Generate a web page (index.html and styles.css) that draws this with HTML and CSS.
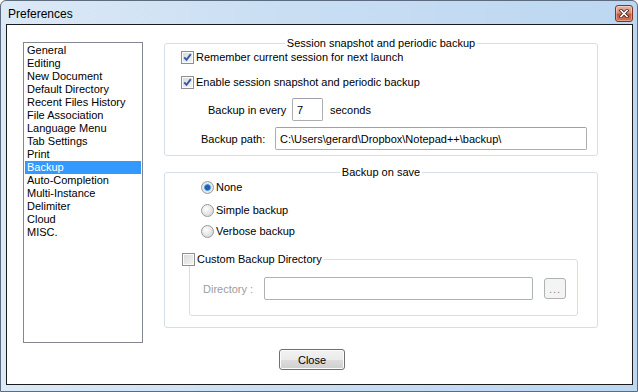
FILE: index.html
```html
<!DOCTYPE html>
<html lang="en">
<head>
	<meta charset="UTF-8">
	<meta name="viewport" content="width=device-width, initial-scale=1.0">
	<title>Preferences</title>
	<link rel="stylesheet" href="styles.css">
</head>
<body>
	<div id="window">
		<header class="title-bar">
			<span class="title-text">Preferences</span>
			<button type="button" class="title-close">
				<svg width="10" height="9" viewBox="0 0 10 9">
					<path d="M2 1.5 L8 7.5 M8 1.5 L2 7.5" stroke="#3a2a26" stroke-width="3.2" stroke-linecap="square"/>
					<path d="M2 1.5 L8 7.5 M8 1.5 L2 7.5" stroke="#ffffff" stroke-width="1.6" stroke-linecap="square"/>
				</svg>
			</button>
		</header>
		<main id="client">
			<div class="body-row">
				<ul class="page-list">
					<li>General</li>
					<li>Editing</li>
					<li>New Document</li>
					<li>Default Directory</li>
					<li>Recent Files History</li>
					<li>File Association</li>
					<li>Language Menu</li>
					<li>Tab Settings</li>
					<li>Print</li>
					<li class="selected">Backup</li>
					<li>Auto-Completion</li>
					<li>Multi-Instance</li>
					<li>Delimiter</li>
					<li>Cloud</li>
					<li>MISC.</li>
				</ul>
				<div class="panel">
					<fieldset class="group group-session">
						<legend>Session snapshot and periodic backup</legend>
						<label class="check-row first">
							<span class="checkbox">
								<svg width="11" height="11" viewBox="0 0 11 11"><path d="M2.2 5.4 L4.5 7.8 L8.8 2.2" fill="none" stroke="#3457a6" stroke-width="1.9"/></svg>
							</span>
							Remember current session for next launch
						</label>
						<label class="check-row second">
							<span class="checkbox">
								<svg width="11" height="11" viewBox="0 0 11 11"><path d="M2.2 5.4 L4.5 7.8 L8.8 2.2" fill="none" stroke="#3457a6" stroke-width="1.9"/></svg>
							</span>
							Enable session snapshot and periodic backup
						</label>
						<div class="field-row every-row">
							<span class="every-label">Backup in every</span>
							<input type="text" class="input every-input" value="7">
							<span class="seconds">seconds</span>
						</div>
						<div class="field-row path-row">
							<span class="path-label">Backup path:</span>
							<input type="text" class="input path-input" value="C:\Users\gerard\Dropbox\Notepad++\backup\">
						</div>
					</fieldset>

					<fieldset class="group group-save">
						<legend>Backup on save</legend>
						<label class="radio-row none-row"><span class="radio checked"></span>None</label>
						<label class="radio-row simple-row"><span class="radio"></span>Simple backup</label>
						<label class="radio-row verbose-row"><span class="radio"></span>Verbose backup</label>
						<fieldset class="group custom-dir">
							<legend class="check-row"><span class="checkbox"></span>Custom Backup Directory</legend>
							<div class="field-row dir-row">
								<span class="dir-label">Directory :</span>
								<input type="text" class="input dir-input" disabled>
								<button type="button" class="browse" disabled>...</button>
							</div>
						</fieldset>
					</fieldset>
				</div>
			</div>
			<footer class="footer">
				<button type="button" class="btn-close">Close</button>
			</footer>
		</main>
	</div>
</body>
</html>
```

FILE: styles.css
```css
* {
	margin: 0;
	padding: 0;
	box-sizing: border-box;
	font-family: "Liberation Sans", Arial, sans-serif;
	font-size: 11px;
	color: #000;
	outline: none;
}
body {
	width: 638px;
	height: 392px;
	overflow: hidden;
	background-color: #fff;
}
#window {
	width: 638px;
	height: 392px;
	display: flex;
	flex-direction: column;
	padding: 0 4px 6px 5px;
	border: 1px solid #5c6b7e;
	border-radius: 6px 6px 0 0;
	background: linear-gradient(to right, #dce9f6, #c9def3 45%, #bcd7f1);
}
.title-bar {
	height: 23px;
	display: flex;
	justify-content: space-between;
	align-items: flex-start;
}
.title-text {
	font-size: 12px;
	line-height: 12px;
	margin: 7px 0 0 2px;
}
.title-close {
	width: 18px;
	height: 17px;
	margin-top: 4px;
	display: flex;
	align-items: center;
	justify-content: center;
	border: 1px solid #7d3526;
	border-radius: 3px;
	background: linear-gradient(to bottom, #eab4a6, #dc8a72 45%, #c9553a 55%, #d8705a);
	box-shadow: inset 0 0 0 1px rgba(255,255,255,0.35);
}
#client {
	flex: 1;
	display: flex;
	flex-direction: column;
	padding: 11px 0 0 16px;
	border: 1px solid #1c1c1c;
	background-color: #fff;
}
.body-row {
	display: flex;
	align-items: flex-start;
	gap: 21px;
}
.page-list {
	width: 120px;
	height: 301px;
	margin-top: 6px;
	padding: 1px;
	border: 1px solid #828790;
	list-style: none;
}
.page-list li {
	line-height: 13px;
	height: 13px;
	padding-left: 2px;
	white-space: nowrap;
}
.page-list .selected {
	background-color: #3399ff;
	color: #fff;
}
.panel {
	width: 434px;
}
.group {
	border: 1px solid #d5dfe5;
	border-radius: 3px;
	padding: 0;
	margin: 0;
	min-width: 0;
}
.group legend {
	margin: 0 auto;
	padding: 0 2px;
	line-height: 14px;
}
.check-row, .radio-row, .field-row {
	display: flex;
	align-items: center;
}
.check-row, .radio-row {
	height: 14px;
	line-height: 14px;
}
.checkbox {
	width: 13px;
	height: 13px;
	margin-right: 2px;
	display: flex;
	align-items: center;
	justify-content: center;
	border: 1px solid #8e8f8f;
	background: linear-gradient(135deg, #d6d8db, #f6f6f6);
	box-shadow: inset 0 0 0 1px #fbfbfb;
}
.radio {
	width: 13px;
	height: 13px;
	margin-right: 2px;
	border-radius: 50%;
	border: 1px solid #979a9d;
	background: radial-gradient(circle at 38% 35%, #ffffff, #e4e4e4 55%, #cfd0d1);
}
.radio.checked {
	background: radial-gradient(circle at 50% 50%, #2a6db8 0, #1a57a0 2px, #6aa9de 3.2px, #dfe7ee 3.8px, #e9e9e9 60%, #cfd0d1);
}
.input {
	height: 23px;
	padding-left: 4px;
	border: 1px solid #abadb3;
	border-top-color: #9ea1a7;
	border-radius: 2px;
	background-color: #fff;
}

/* session group */
.group-session {
	padding-bottom: 5px;
}
.group-session .check-row {
	margin-left: 16px;
}
.group-session .second {
	margin-top: 11px;
}
.every-row {
	margin-top: 9px;
}
.every-label {
	margin-left: 43px;
	width: 84px;
}
.every-input {
	width: 31px;
}
.seconds {
	margin-left: 7px;
}
.path-row {
	margin-top: 6px;
}
.path-label {
	margin-left: 36px;
	width: 74px;
}
.path-input {
	width: 312px;
}

/* backup on save group */
.group-save {
	margin-top: 9px;
	padding-bottom: 11px;
}
.radio-row {
	margin-left: 36px;
}
.none-row {
	margin-top: 1px;
}
.simple-row {
	margin-top: 9px;
}
.verbose-row {
	margin-top: 7px;
}
.custom-dir {
	margin: 14px 19px 0 24px;
	padding-bottom: 15px;
}
.custom-dir legend.check-row {
	margin: 0 0 0 -8px;
	padding: 0 2px 0 0;
	display: flex;
}
.dir-row {
	margin-top: 11px;
}
.dir-label {
	margin-left: 13px;
	width: 61px;
	color: #9d9d9d;
}
.dir-input {
	width: 269px;
	border-color: #adb2b5;
}
.browse {
	width: 22px;
	height: 21px;
	margin-left: 11px;
	border: 1px solid #adb2b5;
	border-radius: 3px;
	background-color: #f4f4f4;
	color: #8a8a8a;
	letter-spacing: 1px;
}

.footer {
	display: flex;
}
.btn-close {
	width: 66px;
	height: 21px;
	margin: 6px 0 0 256px;
	border: 1px solid #707070;
	border-radius: 3px;
	background: linear-gradient(to bottom, #f2f2f2, #ebebeb 50%, #dddddd 51%, #cfcfcf);
	box-shadow: inset 0 0 0 1px #fcfcfc;
	cursor: pointer;
}
```
